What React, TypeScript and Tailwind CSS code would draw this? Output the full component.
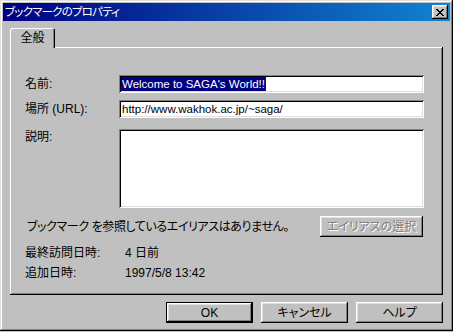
const raised =
  "shadow-[inset_-1px_-1px_0_#000,inset_1px_1px_0_#fff,inset_-2px_-2px_0_#808080,inset_2px_2px_0_#dfdfdf]";
const panelBorder =
  "shadow-[inset_-1px_-1px_0_#000,inset_1px_1px_0_#fff,inset_-2px_-2px_0_#808080]";
const sunken =
  "shadow-[inset_1px_1px_0_#808080,inset_-1px_-1px_0_#fff,inset_2px_2px_0_#000,inset_-2px_-2px_0_#dfdfdf]";

function Btn({ label, def, disabled, w }: { label: string; def?: boolean; disabled?: boolean; w: string }) {
  if (def) {
    return (
      <div className={`${w} h-[21px] border border-black bg-[#c0c0c0]`}>
        <div className={`h-full w-full ${raised} flex items-center justify-center text-black`}>{label}</div>
      </div>
    );
  }
  return (
    <div
      className={`${w} h-[21px] shrink-0 bg-[#c0c0c0] ${raised} flex items-center justify-center whitespace-nowrap ${
        disabled ? "text-[#808080] [text-shadow:1px_1px_0_#fff]" : "text-black"
      }`}
    >
      {label}
    </div>
  );
}

export default function App() {
  return (
    <div className="w-[453px] h-[332px] bg-[#c0c0c0] font-['Liberation_Sans','Noto_Sans_CJK_JP',sans-serif] [font-feature-settings:'palt'] text-[12px] leading-[14px] text-black overflow-hidden">
      <div className="w-[453px] h-[331px] p-[3px] shadow-[inset_-1px_-1px_0_#000,inset_1px_1px_0_#dfdfdf,inset_-2px_-2px_0_#808080,inset_2px_2px_0_#fff] flex flex-col">
        {/* title bar */}
        <div className="h-[18px] bg-[linear-gradient(to_right,#000080,#1084d0)] flex items-center justify-between pl-[2px] pr-[2px]">
          <span className="text-white text-[11.5px] tracking-[-0.8px]">ブックマークのプロパティ</span>
          <div className={`w-[16px] h-[14px] bg-[#c0c0c0] ${raised} flex items-center justify-center`}>
            <svg width="8" height="7" viewBox="0 0 8 7" shapeRendering="crispEdges">
              <path d="M0 0h2v1h-2zM6 0h2v1h-2zM1 1h2v1h-2zM5 1h2v1h-2zM2 2h4v1h-4zM3 3h2v1h-2zM2 4h4v1h-4zM1 5h2v1h-2zM5 5h2v1h-2zM0 6h2v1h-2zM6 6h2v1h-2z" fill="#000" />
            </svg>
          </div>
        </div>

        <div className="px-[7px] pt-[7px] flex flex-col">
          {/* tab */}
          <div className="flex">
            <div className="relative z-10 -mb-[1px] w-[45px] h-[20px] bg-[#c0c0c0] rounded-tl-[2px] rounded-tr-[2px] shadow-[inset_1px_1px_0_#fff,inset_-1px_0_0_#000,inset_-2px_0_0_#808080] flex items-start justify-center pt-[3px]">
              全般
            </div>
          </div>
          {/* panel */}
          <div className={`h-[248px] bg-[#c0c0c0] ${panelBorder} pl-[15px] pr-[19px] pt-[28px] flex flex-col`}>
            <div className="flex items-center h-[18px]">
              <div className="w-[94px]">名前:</div>
              <div className={`flex-1 h-[18px] bg-white ${sunken} flex items-center pl-[2px] text-[11.5px]`}>
                <span className="bg-[#000080] text-white px-[1px] leading-[14px] whitespace-nowrap">Welcome to SAGA's World!!</span>
              </div>
            </div>
            <div className="flex items-center h-[18px] mt-[7px]">
              <div className="w-[94px]">場所 (URL):</div>
              <div className={`flex-1 h-[18px] bg-white ${sunken} flex items-center pl-[3px] text-[11.5px] whitespace-nowrap`}>
                http://www.wakhok.ac.jp/~saga/
              </div>
            </div>
            <div className="flex items-start mt-[11px]">
              <div className="w-[94px] pt-[1px]">説明:</div>
              <div className={`flex-1 h-[79px] bg-white ${sunken}`} />
            </div>
            <div className="flex items-center justify-between mt-[8px] pl-[2px] pr-[1px]">
              <div className="whitespace-nowrap tracking-[-0.4px]">ブックマーク を参照しているエイリアスはありません。</div>
              <Btn label="エイリアスの選択" disabled w="w-[103px]" />
            </div>
            <div className="flex items-center h-[20px] mt-[6px]">
              <div className="w-[100px]">最終訪問日時:</div>
              <div>4 日前</div>
            </div>
            <div className="flex items-center h-[20px]">
              <div className="w-[100px]">追加日時:</div>
              <div>1997/5/8 13:42</div>
            </div>
          </div>
          {/* buttons */}
          <div className="flex justify-end gap-[8px] mt-[7px]">
            <Btn label="OK" def w="w-[87px]" />
            <Btn label="キャンセル" w="w-[87px]" />
            <Btn label="ヘルプ" w="w-[87px]" />
          </div>
        </div>
      </div>
    </div>
  );
}
